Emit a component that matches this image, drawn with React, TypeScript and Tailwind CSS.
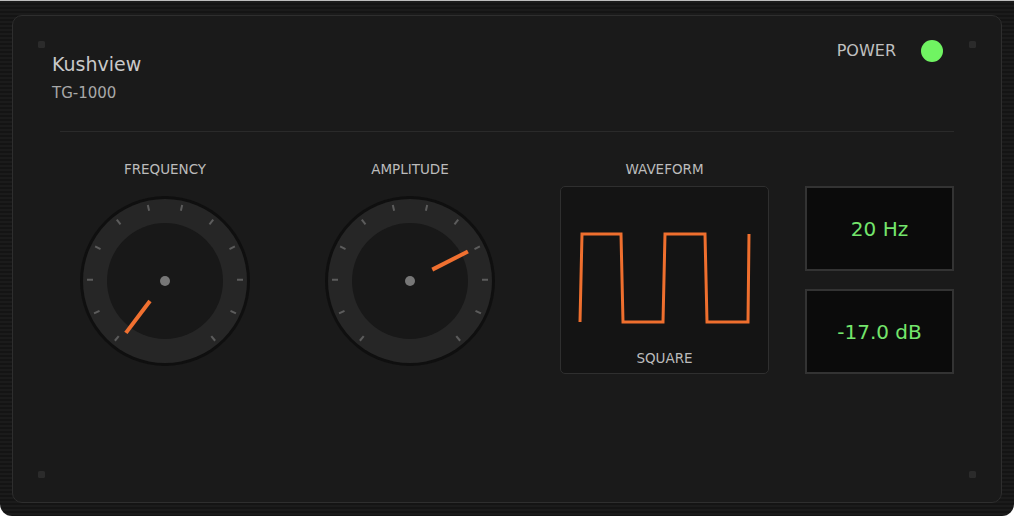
import React from 'react'

// knob geometry (svg units, box is 190x190)
const C = 95
const TICKS = Array.from({ length: 12 }, (_, i) => -140 + (280 / 11) * i)

function polar(angle: number, r: number) {
  const rad = (angle * Math.PI) / 180
  return { x: C + r * Math.sin(rad), y: C - r * Math.cos(rad) }
}

function Knob({ label, angle }: { label: string; angle: number }) {
  const p1 = polar(angle, 25)
  const p2 = polar(angle, 65)

  return (
    <div className="flex flex-col items-center w-[190px]">
      <div className="text-[13.5px] leading-5 text-[#bcbcbc] mb-[7px]">{label}</div>
      <svg width="190" height="188" viewBox="0 0 190 188" className="block">
        <circle cx={C} cy={C} r="85" fill="#0f0f0f" />
        <circle cx={C} cy={C} r="82" fill="#262626" />
        <circle cx={C} cy={C} r="58" fill="#181818" />
        {TICKS.map((a) => {
          const t1 = polar(a, 72)
          const t2 = polar(a, 78)
          return (
            <line key={a} x1={t1.x} y1={t1.y} x2={t2.x} y2={t2.y} stroke="#5c5c5c" strokeWidth="2" />
          )
        })}
        <circle cx={C} cy={C} r="5" fill="#777777" />
        <line x1={p1.x} y1={p1.y} x2={p2.x} y2={p2.y} stroke="#f07030" strokeWidth="4" />
      </svg>
    </div>
  )
}

function Waveform() {
  return (
    <div className="flex flex-col items-center w-[209px]">
      <div className="text-[13.5px] leading-5 text-[#bcbcbc] mb-[7px]">WAVEFORM</div>
      <div className="w-[209px] h-[188px] rounded-[5px] border border-[#2f2f2f] bg-[#141414] flex flex-col items-center">
        <svg width="207" height="161" viewBox="0 0 207 161" className="block">
          <path
            d="M19 135 L21 47 L60 47 L62 135 L102 135 L104 47 L144 47 L146 135 L187 135 L188 47"
            fill="none"
            stroke="#ef6f2e"
            strokeWidth="3"
          />
        </svg>
        <div className="text-[13.5px] leading-5 text-[#bcbcbc]">SQUARE</div>
      </div>
    </div>
  )
}

function Display({ value }: { value: string }) {
  return (
    <div className="w-[149px] h-[85px] border-2 border-[#333333] bg-[#0b0b0b] flex items-center justify-center">
      <span className="text-[20px] text-[#74e56c]">{value}</span>
    </div>
  )
}

function Screw({ pos }: { pos: string }) {
  return <div className={`absolute w-[7px] h-[7px] rounded-[1.5px] bg-[#2b2b2b] ${pos}`} />
}

export default function App() {
  return (
    <div className="bg-white w-[1014px] h-[516px]" style={{ fontFamily: '"DejaVu Sans", "Noto Sans", sans-serif' }}>
      <div className="h-[516px] border-t border-[#bdbdbd] rounded-b-[12px] overflow-hidden pt-[14px] px-3 bg-[repeating-linear-gradient(180deg,#1b1b1b_0px,#1b1b1b_2px,#141414_2px,#141414_4px)]">
        <div className="relative h-[488px] rounded-[10px] border border-[#2e2e2e] bg-[#1a1a1a] pt-[23px] px-[39px]">
          <Screw pos="left-[25px] top-[25px]" />
          <Screw pos="right-[25px] top-[25px]" />
          <Screw pos="left-[25px] bottom-[24px]" />
          <Screw pos="right-[25px] bottom-[24px]" />

          {/* Header */}
          <div className="flex items-start justify-between">
            <div className="pt-[10px]">
              <div className="text-[19px] leading-7 text-[#c9c9c9] translate-y-px">Kushview</div>
              <div className="mt-[6px] text-[15px] leading-5 text-[#a8a8a8]">TG-1000</div>
            </div>
            <div className="flex items-center gap-[25px] mr-[19px]">
              <span className="text-[16px] leading-6 text-[#c0c0c0]">POWER</span>
              <div className="w-[22px] h-[22px] rounded-full bg-[#70f462]" />
            </div>
          </div>

          <div className="mt-[28px] mx-2 h-px bg-[#2a2a2a]" />

          {/* Controls */}
          <div className="mt-[27px] ml-[18px] flex items-start">
            <Knob label="FREQUENCY" angle={-143} />
            <div className="ml-[55px]">
              <Knob label="AMPLITUDE" angle={63} />
            </div>
            <div className="ml-[55px]">
              <Waveform />
            </div>
            <div className="ml-[36px] pt-[27px] flex flex-col gap-[18px]">
              <Display value="20 Hz" />
              <Display value="-17.0 dB" />
            </div>
          </div>
        </div>
      </div>
    </div>
  )
}
